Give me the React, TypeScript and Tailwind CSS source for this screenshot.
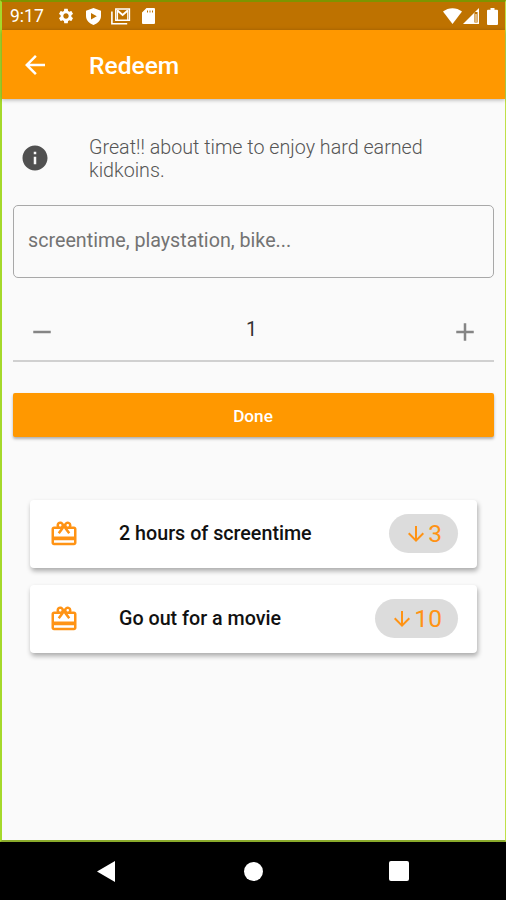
import React from 'react'
import {
    MdAdd,
    MdArrowBack,
    MdArrowDownward,
    MdInfo,
    MdRedeem,
    MdRemove,
    MdSettings,
} from 'react-icons/md'

const rewards = [
    { title: '2 hours of screentime', cost: 3 },
    { title: 'Go out for a movie', cost: 10 },
]

const StatusBar = () => {
    return (
        <div className="h-7 bg-[#be7200] flex items-center text-white pl-2 pr-[7px]">
            <span className="w-[47px] pt-0.5 text-[17.5px] leading-none">9:17</span>
            <MdSettings className="w-[18px] h-[18px]" />
            <svg className="w-[15px] h-[17px] ml-[11px]" viewBox="0 0 15 17" fill="currentColor">
                <path fillRule="evenodd" d="M7.5 0 15 2.8V8c0 4.2-3.1 7.4-7.5 9C3.1 15.4 0 12.2 0 8V2.8ZM5 5v6.400l5.800-3.200Z" />
            </svg>
            <svg className="w-5 h-[17px] ml-[10px]" viewBox="0 0 20 17" fill="none" stroke="currentColor">
                <path d="M.9 3.500v12.200h15.300" strokeWidth="1.600" />
                <path d="M4.800 1h13.600v11.300H4.800Z" strokeWidth="1.500" />
                <path d="M6.500 2.500 11.600 7l5.100-4.500" strokeWidth="1.900" />
                <path d="M6.500 2v10M16.700 2v10" strokeWidth="1.100" />
            </svg>
            <svg className="w-[13px] h-4 ml-[11px]" viewBox="0 0 13 16" fill="currentColor">
                <path fillRule="evenodd" d="M4.500 0H12q1 0 1 1v14q0 1-1 1H1q-1 0-1-1V4.500ZM5 2.500v2h1v-2ZM7.500 2.500v2h1v-2ZM10 2.500v2h1v-2Z" />
            </svg>
            <div className="ml-auto flex items-center">
                <svg className="w-[19px] h-4" viewBox="0 0 19 16" fill="currentColor">
                    <path d="M0 3.500C5.500-1 13.500-1 19 3.500L9.500 16Z" />
                </svg>
                <svg className="w-4 h-4 ml-px" viewBox="0 0 16 16" fill="currentColor">
                    <path fillRule="evenodd" d="M16 0v16H0ZM14.600 4h-3.200v10.600h3.200Z" />
                    <path d="M12.500 6h1v8h-1Z" />
                </svg>
                <svg className="w-[11px] h-[17px] ml-2" viewBox="0 0 11 17" fill="currentColor">
                    <path d="M3.500 0h4v1.700H10q1 0 1 1V16q0 1-1 1H1q-1 0-1-1V2.700q0-1 1-1h2.500Z" />
                </svg>
            </div>
        </div>
    )
}

const NavBar = () => {
    return (
        <div className="h-[58px] bg-black flex items-center">
            <svg className="w-[18px] h-[21px] ml-[97px]" viewBox="0 0 18 21" fill="white">
                <path d="M18 0v21L0 10.500Z" />
            </svg>
            <div className="w-[19px] h-[19px] ml-[129px] rounded-full bg-white"></div>
            <div className="w-5 h-5 ml-[126px] rounded-xs bg-white"></div>
        </div>
    )
}

const RewardCard = ({ title, cost }: { title: string; cost: number }) => {
    return (
        <div className="h-[68px] flex items-center rounded bg-white pl-[19px] pr-[19px] shadow-[1px_3px_5px_rgba(0,0,0,0.32)]">
            <MdRedeem className="w-[30px] h-[30px] text-[#ff9314]" />
            <span className="ml-10 text-[19.7px] font-medium text-[#111]">{title}</span>
            <div className="ml-auto mb-px h-[39px] flex items-center rounded-full bg-[#dcdcdc] px-[15px] text-[#ff9314]">
                <MdArrowDownward className="w-6 h-6" />
                <span className="pt-0.5 pr-px text-[24.6px] leading-none">{cost}</span>
            </div>
        </div>
    )
}

const App = () => {
    return (
        <div className="w-[506px] h-[900px] flex flex-col overflow-hidden bg-black font-[Roboto,sans-serif]">
            <div className="h-[842px] flex flex-col bg-[#fafafa] border-t-2 border-t-[#7e9400] border-l-2 border-l-[#a5d92b] border-r border-r-[#bfe048] border-b-2 border-b-[#8bab2c]">
                <StatusBar />
                <div className="h-[69px] flex items-center bg-[#ff9800] pl-[18px] text-white shadow-[0_1px_4px_rgba(0,0,0,0.3)]">
                    <MdArrowBack className="w-[30px] h-[30px]" />
                    <h1 className="ml-[39px] pt-[3px] text-[24.6px] font-medium">Redeem</h1>
                </div>
                <div className="flex flex-col pl-[11px] pr-[11px]">
                    <div className="mt-9 flex items-center pl-[7px]">
                        <MdInfo className="mb-0.5 w-[30px] h-[30px] text-[#505050]" />
                        <p className="ml-[39px] w-[350px] pt-px text-[19.7px] leading-[23px] font-light text-[#555]">
                            Great!! about time to enjoy hard earned kidkoins.
                        </p>
                    </div>
                    <div className="mt-[23px] h-[73px] flex items-center rounded-[5px] border border-[#a8a8a8] pb-px pl-[14px] text-[19.7px] text-[#737373]">
                        screentime, playstation, bike...
                    </div>
                    <div className="h-[84px] flex items-center justify-between border-b-2 border-[#d0d0d0] px-[14px] pt-[25px] text-[#858585]">
                        <MdRemove className="w-[30px] h-[30px]" />
                        <span className="mr-1 -mt-1 text-[19.7px] text-[#333]">1</span>
                        <MdAdd className="w-[30px] h-[30px]" />
                    </div>
                    <button className="mt-[31px] h-11 rounded-xs bg-[#ff9800] pt-[3px] pr-px text-[17.2px] font-medium text-white shadow-[0_2px_3px_rgba(0,0,0,0.3)]">
                        Done
                    </button>
                    <div className="mt-[63px] mx-[17px] flex flex-col gap-[17px]">
                        {rewards.map((reward) => (
                            <RewardCard key={reward.title} title={reward.title} cost={reward.cost} />
                        ))}
                    </div>
                </div>
            </div>
            <NavBar />
        </div>
    )
}

export default App
